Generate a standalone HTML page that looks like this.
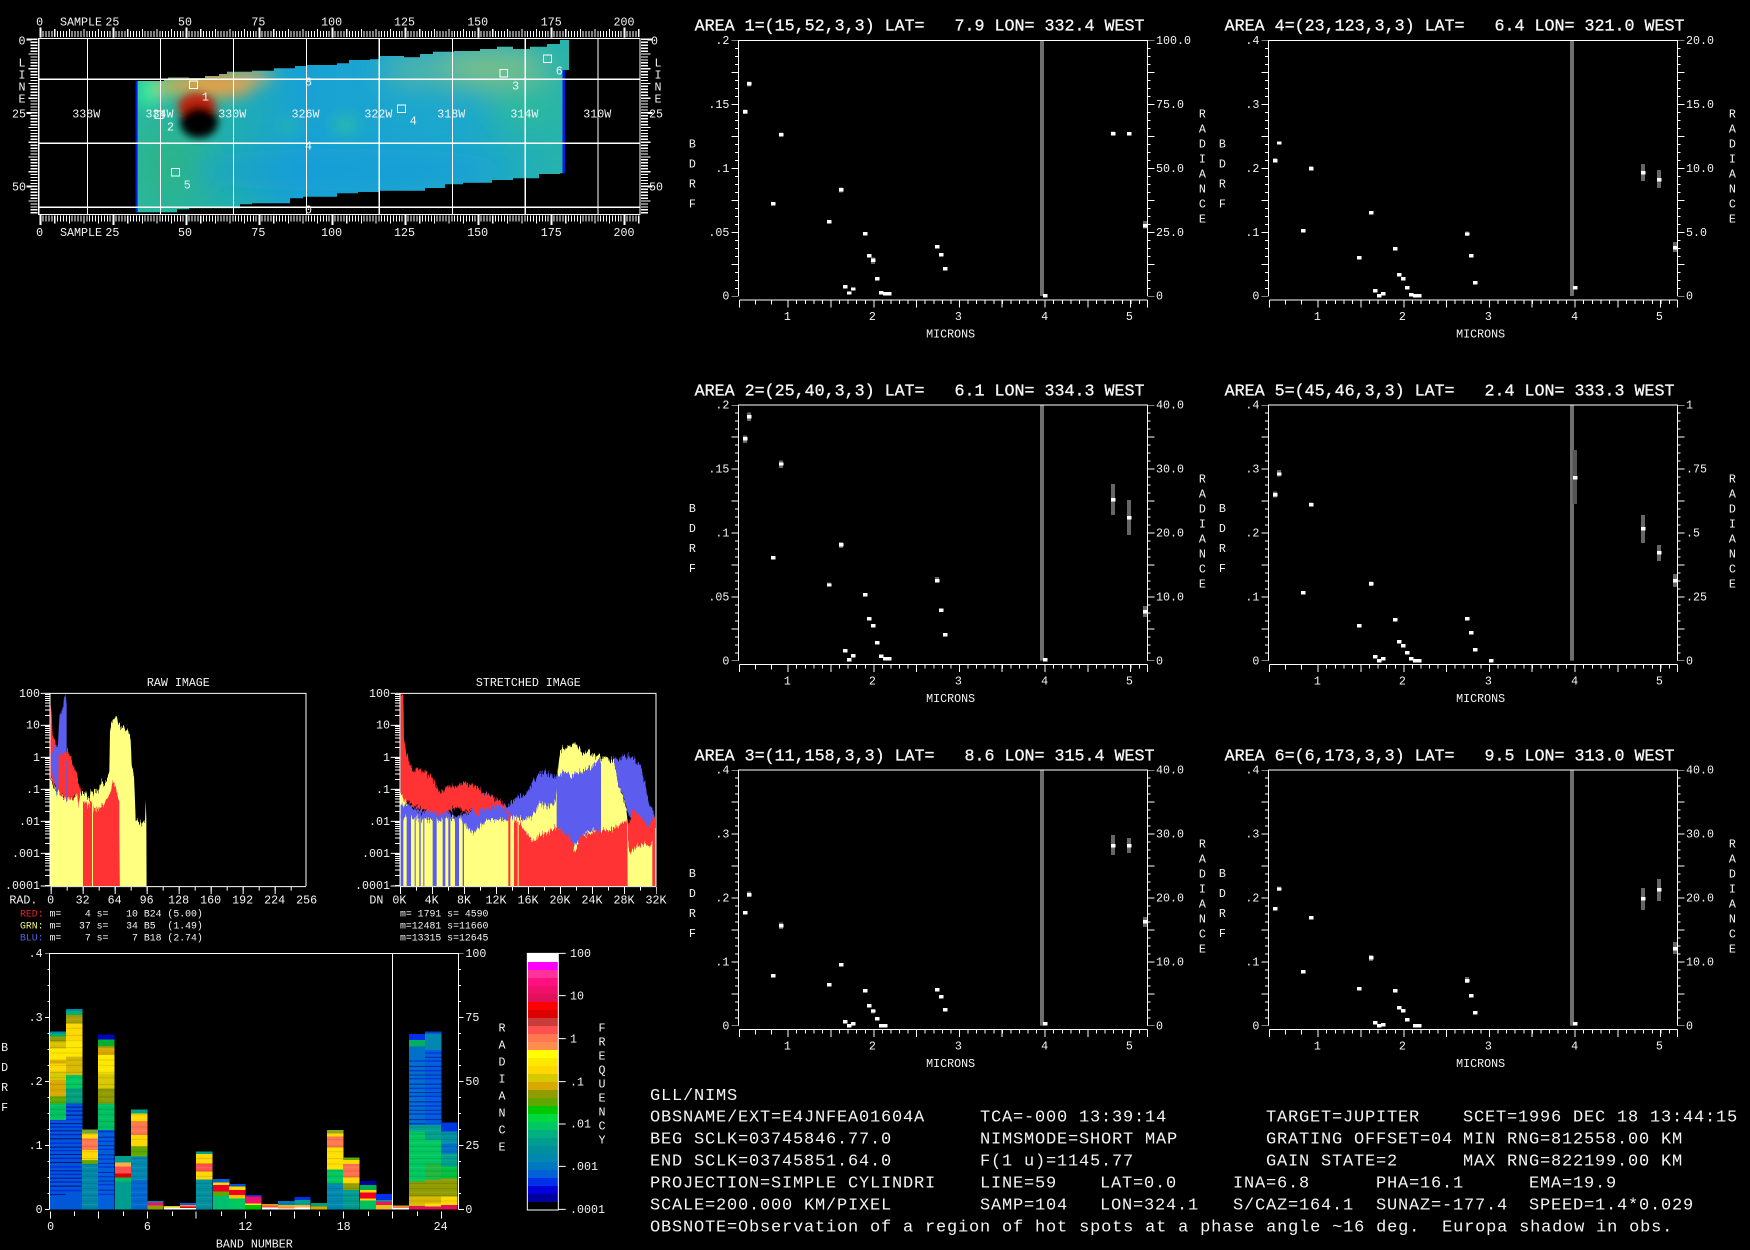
<!DOCTYPE html>
<html><head><meta charset="utf-8"><title>GLL/NIMS</title>
<style>
html,body{margin:0;padding:0;background:#000;width:1750px;height:1250px;overflow:hidden}
svg{display:block}
text{font-family:"Liberation Mono","DejaVu Sans Mono",monospace;fill:#f4f4f4;white-space:pre}
.s{font-size:35px}
.m{font-size:11.67px}
.l{font-size:29.5px}
.t{font-size:50px;stroke:#fff;stroke-width:.9px}
.b{font-size:17px;letter-spacing:.8px}
.e{text-anchor:end}
.c{text-anchor:middle}
.d rect{width:13px;height:10px;fill:#fff}
.g rect{width:12px;fill:#666}
.col rect{width:49px}
.cb rect{width:93px;x:0}
.cr{shape-rendering:crispEdges}
</style></head>
<body>
<svg xmlns="http://www.w3.org/2000/svg" width="1750" height="1250" viewBox="0 0 1750 1250">
<defs>
<g id="ax" fill="none" stroke="#fff" class="cr">
<path d="M175,888V121H1402V888" stroke-width="3"/>
<path d="M170,121V889M1407,121V889" stroke-width="10" stroke-dasharray="3 21" stroke-dashoffset="1.5"/>
<path d="M165,121V889M1413,121V889" stroke-width="20" stroke-dasharray="3 93" stroke-dashoffset="1.5"/>
<path d="M179,900H1402" stroke-width="3"/>
<path d="M323,906H1402" stroke-width="12" stroke-dasharray="3 22.7"/>
<path d="M323,911H1402" stroke-width="22" stroke-dasharray="3 125.4"/>
<path d="M179,900v22M1402,900v22M227,900v14M275,900v14" stroke-width="3"/>
</g>
<g id="logt" stroke="#fff" stroke-width="3" fill="none" class="cr"><path d="M135,96H150M135,67H150M135,50H150M135,38H150M135,29H150M135,21H150M135,15H150M135,9H150M135,4H150"/></g>
<g id="logtick"><path d="M122,0H150" stroke="#fff" stroke-width="3"/><use href="#logt"/></g>
<clipPath id="cp"><path d="M135.5,81H164V79H168V77.5H189V78H205V76H219V74H227V71.7H252V70.7H274V68.3H295V66H307V65H337V63.3H349V60H370V59.3H379V56H404V57.3H420V54H433V51.7H454V51H480V49H497V46.7H513V49H530V46.7H547V44H560V40H569V70H565V173.3H560V174H539V178.3H513V180H492V182.7H463V184.3H445V188H425V190.7H379V192H358V193.3H337V196.7H303V198.3H290V203.3H252V204.3H240V208.3H189V209.3H177V212.3H135.5Z"/></clipPath>
<clipPath id="hc1"><rect x="150" y="70" width="768" height="578"/></clipPath>
<clipPath id="hc2"><rect x="180" y="70" width="768" height="578"/></clipPath>
<filter id="b8" x="-50%" y="-50%" width="200%" height="200%"><feGaussianBlur stdDeviation="8"/></filter>
<filter id="b4" x="-50%" y="-50%" width="200%" height="200%"><feGaussianBlur stdDeviation="4"/></filter>
<filter id="b14" x="-50%" y="-50%" width="200%" height="200%"><feGaussianBlur stdDeviation="14"/></filter>
<filter id="jag" filterUnits="userSpaceOnUse" x="100" y="0" width="900" height="720" color-interpolation-filters="sRGB">
<feTurbulence type="fractalNoise" baseFrequency="0.3 0.002" numOctaves="2" seed="4" result="n"/>
<feColorMatrix in="n" type="matrix" values="1 0 0 0 0  0 0 0 0 .5  0 0 0 0 .5  0 0 0 0 1" result="m"/>
<feDisplacementMap in="SourceGraphic" in2="m" scale="45" xChannelSelector="G" yChannelSelector="R"/>
</filter>
<linearGradient id="base" x1="0" x2="1" y1="0" y2="0"><stop offset="0" stop-color="#2db89c"/><stop offset=".2" stop-color="#22b0a8"/><stop offset=".38" stop-color="#18a2d4"/><stop offset=".75" stop-color="#1ca8cc"/><stop offset="1" stop-color="#28b4a8"/></linearGradient>
<pattern id="st1" width="49" height="71" patternUnits="userSpaceOnUse"><rect y="3" width="49" height="3" fill="#001090"/><rect y="14" width="49" height="4" fill="#0020c0"/><rect y="27" width="49" height="3" fill="#000a70"/><rect y="39" width="49" height="5" fill="#0030e0"/><rect y="52" width="49" height="3" fill="#001090"/><rect y="62" width="49" height="4" fill="#0028d0"/></pattern>
<pattern id="st2" width="49" height="53" patternUnits="userSpaceOnUse"><rect y="7" width="49" height="3" fill="#0020b0"/><rect y="19" width="49" height="4" fill="#0030e0"/><rect y="33" width="49" height="2" fill="#001090"/><rect y="43" width="49" height="4" fill="#0030e0"/></pattern>
<pattern id="st3" width="49" height="37" patternUnits="userSpaceOnUse"><rect y="5" width="49" height="2" fill="#000" fill-opacity=".14"/><rect y="15" width="49" height="3" fill="#fff" fill-opacity=".08"/><rect y="26" width="49" height="2" fill="#000" fill-opacity=".18"/><rect y="32" width="49" height="2" fill="#fff" fill-opacity=".06"/></pattern>
</defs>
<rect width="1750" height="1250" fill="#000"/>

<!-- MAP -->
<g clip-path="url(#cp)">
<rect x="130" y="35" width="445" height="185" fill="url(#base)"/>
<g filter="url(#b14)">
<ellipse cx="172" cy="165" rx="34" ry="36" fill="#2cb48a"/>
<ellipse cx="485" cy="68" rx="66" ry="20" fill="#7cc088"/>
<ellipse cx="420" cy="70" rx="38" ry="14" fill="#5cb8a0"/>
<ellipse cx="530" cy="105" rx="36" ry="28" fill="#2cb8a0"/>
<ellipse cx="350" cy="170" rx="160" ry="12" fill="#169cd8"/>
</g>
<g filter="url(#b8)">
<ellipse cx="345" cy="125" rx="12" ry="7" fill="#30c49c"/>
<ellipse cx="290" cy="126" rx="12" ry="5" fill="#2cbca0"/>
<ellipse cx="148" cy="92" rx="12" ry="15" fill="#30ec9c"/>
<ellipse cx="172" cy="86" rx="16" ry="9" fill="#c8b854"/>
<ellipse cx="215" cy="85" rx="40" ry="12" fill="#f4a040"/>
<ellipse cx="252" cy="77" rx="22" ry="6" fill="#d0ac60"/>
</g>
<g filter="url(#b4)">
<ellipse cx="197" cy="107" rx="19" ry="14" fill="#c02810"/>
<ellipse cx="199" cy="122" rx="19" ry="16" fill="#000"/>
</g>
<rect x="135" y="80" width="2.6" height="135" fill="#0818e8"/>
<rect x="562.5" y="70" width="3" height="105" fill="#0818e8"/>
</g>
<g fill="none" stroke="#fff" class="cr">
<rect x="38.7" y="38.5" width="601.3" height="176" stroke-width="1.2"/>
<path d="M87.5,38V214M160.4,38V214M233.6,38V214M306.4,38V214M379.2,38V214M452.4,38V214M525.3,38V214M598,38V214M38,79.3H640M38,143.3H640M38,207.3H640" stroke-width="1.2"/>
<path d="M39.6,34H640M39.6,218.5H640" stroke-width="6" stroke-dasharray="1 1.92"/>
<path d="M39.6,33H640M39.6,219.5H640" stroke-width="8" stroke-dasharray="1.2 13.4"/>
<path d="M39.6,32.5H640M39.6,220H640" stroke-width="10" stroke-dasharray="2 71"/>
<path d="M34,38.7V214M644.5,38.7V214" stroke-width="7" stroke-dasharray="1.3 1.64"/>
<path d="M33,38.7V214M646,38.7V214" stroke-width="9" stroke-dasharray="1.3 13.4"/>
<path d="M29,38.7V190M650,38.7V190" stroke-width="5" stroke-dasharray="2 71.5"/>
<rect x="189.5" y="81" width="8" height="7.4"/><rect x="155" y="111" width="8" height="7.4"/><rect x="500" y="69.6" width="7.6" height="7.6"/><rect x="397.6" y="105" width="8" height="7.6"/><rect x="171.6" y="168.6" width="8" height="7.6"/><rect x="543.3" y="55" width="8" height="7.4"/>
</g>
<g class="m">
<text x="39.6" y="25.3" class="m c">0</text><text x="60" y="25.3" class="m">SAMPLE</text><text x="112.4" y="25.3" class="m c">25</text><text x="185" y="25.3" class="m c">50</text><text x="258.4" y="25.3" class="m c">75</text><text x="331.6" y="25.3" class="m c">100</text><text x="404.5" y="25.3" class="m c">125</text><text x="477.7" y="25.3" class="m c">150</text><text x="551.3" y="25.3" class="m c">175</text><text x="624" y="25.3" class="m c">200</text>
<text x="39.6" y="236" class="m c">0</text><text x="60" y="236" class="m">SAMPLE</text><text x="112.4" y="236" class="m c">25</text><text x="185" y="236" class="m c">50</text><text x="258.4" y="236" class="m c">75</text><text x="331.6" y="236" class="m c">100</text><text x="404.5" y="236" class="m c">125</text><text x="477.7" y="236" class="m c">150</text><text x="551.3" y="236" class="m c">175</text><text x="624" y="236" class="m c">200</text>
<text x="22" y="44.5" class="m c">0</text><text x="19" y="117.5" class="m c">25</text><text x="19" y="190.5" class="m c">50</text>
<text x="651" y="44.5" class="m">0</text><text x="649" y="117.5" class="m">25</text><text x="649" y="190.5" class="m">50</text>
<text x="22" y="66.7" class="m c">L</text><text x="22" y="78.7" class="m c">I</text><text x="22" y="90.7" class="m c">N</text><text x="22" y="102.7" class="m c">E</text>
<text x="658" y="66.7" class="m c">L</text><text x="658" y="78.7" class="m c">I</text><text x="658" y="90.7" class="m c">N</text><text x="658" y="102.7" class="m c">E</text>
<text x="86.3" y="117.5" class="m c">338W</text><text x="159.5" y="117.5" class="m c">334W</text><text x="232.3" y="117.5" class="m c">330W</text><text x="305.5" y="117.5" class="m c">326W</text><text x="378.4" y="117.5" class="m c">322W</text><text x="451.2" y="117.5" class="m c">318W</text><text x="524.4" y="117.5" class="m c">314W</text><text x="597.2" y="117.5" class="m c">310W</text>
<text x="308.5" y="85.7" class="m c">8</text><text x="308.5" y="149.7" class="m c">4</text><text x="308.5" y="213.7" class="m c">0</text>
<text x="205.4" y="100.7" class="m c">1</text><text x="170.5" y="130.7" class="m c">2</text><text x="515.6" y="89.7" class="m c">3</text><text x="413.3" y="124.7" class="m c">4</text><text x="187.3" y="188.3" class="m c">5</text><text x="559.3" y="74.7" class="m c">6</text>
</g>

<!-- RAW HISTOGRAM -->
<g transform="translate(0,670) scale(.33333)">
<g clip-path="url(#hc1)"><g filter="url(#jag)">
<polygon fill="#ffff80" points="150,330 160,345 170,360 180,365 190,378 200,380 215,385 230,372 240,368 250,380 258,376 270,385 272,362 280,372 284,362 296,360 300,345 304,330 312,344 320,340 328,310 330,180 338,155 345,135 350,140 355,165 362,170 370,165 375,178 385,180 392,205 395,290 402,320 407,450 415,455 425,465 430,450 435,452 437,390 439,450 440,690 150,690"/>
<polygon fill="#ff3333" points="150,100 155,130 158,195 170,225 175,235 200,240 215,265 230,310 236,340 243,368 235,405 230,375 222,372 212,390 205,385 200,392 190,372 180,375 172,355 150,325"/>
<polygon fill="#ff3333" points="248,402 262,405 278,395 282,420 300,410 320,395 330,375 336,345 342,335 350,360 358,400 358,490 360,690 248,690"/>
<rect x="245" y="368" width="4" height="320" fill="#ffff80"/><rect x="276" y="390" width="3" height="300" fill="#ffff80"/>
<polygon fill="#5c5cee" points="152,262 165,225 174,225 178,140 190,105 193,75 198,75 200,110 200,240 176,258 175,355 170,380 168,348 158,318"/>
<rect x="199" y="262" width="3" height="128" fill="#5c5cee"/>
</g></g>
<path d="M150,70H918V648" fill="none" stroke="#fff" stroke-width="3"/><path d="M150,70V648H122" fill="none" stroke="#fff" stroke-width="3"/>
<use href="#logtick" y="70"/><use href="#logtick" y="166"/><use href="#logtick" y="262"/><use href="#logtick" y="358"/><use href="#logtick" y="454"/><use href="#logtick" y="550"/>
<g fill="none" stroke="#fff"><path d="M152,650H918" stroke-width="3"/><path d="M152,656H920" stroke-width="12" stroke-dasharray="3 45"/><path d="M152,661H920" stroke-width="22" stroke-dasharray="3 93"/></g>
<text x="535" y="48" class="s c">RAW IMAGE</text>
<text x="120" y="81" class="s e">100</text><text x="120" y="176" class="s e">10</text><text x="120" y="273" class="s e">1</text><text x="120" y="369" class="s e">.1</text><text x="120" y="465" class="s e">.01</text><text x="120" y="561" class="s e">.001</text><text x="120" y="657" class="s e">.0001</text>
<text x="28" y="700" class="s">RAD.</text>
<text x="152" y="700" class="s c">0</text><text x="248" y="700" class="s c">32</text><text x="344" y="700" class="s c">64</text><text x="440" y="700" class="s c">96</text><text x="536" y="700" class="s c">128</text><text x="632" y="700" class="s c">160</text><text x="728" y="700" class="s c">192</text><text x="824" y="700" class="s c">224</text><text x="920" y="700" class="s c">256</text>
<text x="60" y="740" class="l"><tspan style="fill:#e02828">RED:</tspan> m=    4 s=   10 B24 (5.00)</text>
<text x="60" y="776" class="l"><tspan style="fill:#f0f080">GRN:</tspan> m=   37 s=   34 B5  (1.49)</text>
<text x="60" y="812" class="l"><tspan style="fill:#5060e0">BLU:</tspan> m=    7 s=    7 B18 (2.74)</text>
</g>

<!-- STRETCHED HISTOGRAM -->
<g transform="translate(340,670) scale(.33333)">
<g clip-path="url(#hc2)"><g filter="url(#jag)">
<polygon fill="#ffff80" points="180,360 195,385 210,420 240,430 300,440 400,445 500,430 540,430 600,400 650,350 652,320 660,240 680,235 695,218 710,225 730,250 745,240 770,262 800,262 820,270 835,340 860,420 864,470 948,470 948,690 180,690"/>
<polygon fill="#5c5cee" points="182,400 210,405 250,430 300,420 350,440 400,420 430,365 480,395 505,410 520,390 540,380 560,372 580,330 600,312 620,308 650,322 670,305 700,315 730,300 760,285 785,270 785,490 760,480 735,490 710,520 690,540 670,490 650,470 650,362 645,400 620,410 600,400 575,440 550,450 520,440 505,450 440,450 420,470 400,490 380,470 360,445 300,450 250,450 210,440 182,440"/>
<polygon fill="#5c5cee" points="820,268 860,258 880,262 900,285 915,340 930,410 942,425 945,470 920,500 880,440 864,440 862,420 835,340"/>
<g fill="#5c5cee"><rect x="182" y="430" width="8" height="260"/><rect x="200" y="430" width="13" height="260"/><rect x="224" y="440" width="3" height="250"/><rect x="238" y="440" width="4" height="250"/><rect x="250" y="440" width="3" height="250"/><rect x="278" y="440" width="12" height="250"/><rect x="308" y="440" width="8" height="250"/><rect x="325" y="440" width="6" height="250"/><rect x="345" y="440" width="12" height="250"/><rect x="368" y="440" width="4" height="250"/></g>
<polygon fill="#ff3333" points="182,70 190,70 192,200 198,245 210,285 225,300 235,295 250,312 270,315 285,340 300,365 330,352 360,345 375,335 400,350 415,352 430,372 450,378 470,390 490,400 505,425 490,415 470,405 445,420 425,415 415,440 395,420 370,425 350,410 320,430 290,430 260,428 240,418 215,402 195,390 182,365"/>
<polygon fill="#ff3333" points="522,450 540,460 560,490 580,515 600,495 620,490 650,470 670,490 690,500 705,550 720,500 750,490 780,480 810,480 840,465 862,450 863,690 522,690"/>
<polygon fill="#ff3333" points="864,470 880,420 900,440 925,470 945,440 945,500 930,530 915,520 890,530 870,550 864,520"/>
<rect x="505" y="430" width="6" height="260" fill="#ff3333"/><rect x="937" y="470" width="9" height="220" fill="#ff3333"/>
<rect x="533" y="450" width="3" height="240" fill="#ffff80"/><rect x="783" y="265" width="4" height="220" fill="#ffff80"/><rect x="791" y="270" width="3" height="210" fill="#ffff80"/>
</g></g>
<path d="M180,70H948V648" fill="none" stroke="#fff" stroke-width="3"/><path d="M180,70V648H152" fill="none" stroke="#fff" stroke-width="3"/>
<g transform="translate(30,0)"><use href="#logtick" y="70"/><use href="#logtick" y="166"/><use href="#logtick" y="262"/><use href="#logtick" y="358"/><use href="#logtick" y="454"/><use href="#logtick" y="550"/></g>
<g fill="none" stroke="#fff"><path d="M180,650H948" stroke-width="3"/><path d="M180,656H950" stroke-width="12" stroke-dasharray="3 45"/><path d="M180,661H950" stroke-width="22" stroke-dasharray="3 93"/></g>
<text x="565" y="48" class="s c">STRETCHED IMAGE</text>
<text x="150" y="81" class="s e">100</text><text x="150" y="176" class="s e">10</text><text x="150" y="273" class="s e">1</text><text x="150" y="369" class="s e">.1</text><text x="150" y="465" class="s e">.01</text><text x="150" y="561" class="s e">.001</text><text x="150" y="657" class="s e">.0001</text>
<text x="88" y="700" class="s">DN</text>
<text x="178" y="700" class="s c">0K</text><text x="275" y="700" class="s c">4K</text><text x="372" y="700" class="s c">8K</text><text x="468" y="700" class="s c">12K</text><text x="564" y="700" class="s c">16K</text><text x="660" y="700" class="s c">20K</text><text x="756" y="700" class="s c">24K</text><text x="852" y="700" class="s c">28K</text><text x="948" y="700" class="s c">32K</text>
<text x="180" y="740" class="l">m= 1791 s= 4590</text>
<text x="180" y="776" class="l">m=12481 s=11660</text>
<text x="180" y="812" class="l">m=13315 s=12645</text>
</g>

<!-- BAND PLOT -->
<g transform="translate(40,940) scale(.33333)">
<g class="col cr">
<g transform="translate(29,0)"><rect y="275" height="5" fill="#0088b0"/><rect y="280" height="10" fill="#00b070"/><rect y="290" height="15" fill="#909c00"/><rect y="305" height="20" fill="#d8c000"/><rect y="325" height="37" fill="#ffe800"/><rect y="362" height="8" fill="#d8a800"/><rect y="370" height="25" fill="#ffd800"/><rect y="395" height="25" fill="#d8c800"/><rect y="420" height="50" fill="#d8a800"/><rect y="470" height="20" fill="#60a800"/><rect y="490" height="50" fill="#00c060"/><rect y="540" height="268" fill="#0058d8"/><rect y="540" height="230" fill="url(#st1)"/><rect y="290" height="250" fill="url(#st3)"/></g>
<g transform="translate(78,0)"><rect y="207" height="6" fill="#0088b0"/><rect y="213" height="12" fill="#00b070"/><rect y="225" height="25" fill="#a8a000"/><rect y="250" height="50" fill="#ffd800"/><rect y="300" height="50" fill="#ffe800"/><rect y="350" height="55" fill="#d8b800"/><rect y="405" height="40" fill="#00c860"/><rect y="445" height="45" fill="#00a080"/><rect y="490" height="318" fill="#0058d8"/><rect y="490" height="270" fill="url(#st1)"/><rect y="225" height="265" fill="url(#st3)"/></g>
<g transform="translate(126,0)"><rect y="568" height="12" fill="#70a840"/><rect y="580" height="16" fill="#ffd800"/><rect y="596" height="34" fill="#ff7850"/><rect y="630" height="30" fill="#ffd800"/><rect y="660" height="12" fill="#60a800"/><rect y="672" height="136" fill="#0088a8"/><rect y="580" height="228" fill="url(#st3)"/></g>
<g transform="translate(174,0)"><rect y="283" height="15" fill="#0000c0"/><rect y="298" height="22" fill="#00b030"/><rect y="320" height="25" fill="#d8a800"/><rect y="345" height="55" fill="#ffe800"/><rect y="400" height="45" fill="#d8c800"/><rect y="445" height="45" fill="#909c00"/><rect y="490" height="80" fill="#00c060"/><rect y="570" height="238" fill="#0060d8"/><rect y="570" height="200" fill="url(#st2)"/><rect y="320" height="250" fill="url(#st3)"/></g>
<g transform="translate(225,0)"><rect y="648" height="20" fill="#009c90"/><rect y="668" height="12" fill="#ffb040"/><rect y="680" height="20" fill="#ff5050"/><rect y="700" height="12" fill="#dd0000"/><rect y="712" height="13" fill="#00c060"/><rect y="725" height="83" fill="#009c90"/></g>
<g transform="translate(273,0)"><rect y="508" height="12" fill="#00a090"/><rect y="520" height="25" fill="#ffd800"/><rect y="545" height="40" fill="#ff7850"/><rect y="585" height="35" fill="#ffd800"/><rect y="620" height="30" fill="#60a800"/><rect y="650" height="70" fill="#0088b0"/><rect y="720" height="88" fill="#0068d0"/><rect y="520" height="288" fill="url(#st3)"/></g>
<g transform="translate(322,0)"><rect y="783" height="4" fill="#0088b0"/><rect y="787" height="10" fill="#f0106a"/><rect y="797" height="11" fill="#909c00"/></g>
<g transform="translate(372,0)"><rect y="798" height="5" fill="#d8c800"/><rect y="803" height="5" fill="#fff"/></g>
<g transform="translate(420,0)"><rect y="789" height="6" fill="#0060d8"/><rect y="795" height="5" fill="#ff8c50"/><rect y="800" height="4" fill="#dd0000"/><rect y="804" height="4" fill="#fff"/></g>
<g transform="translate(468,0)"><rect y="635" height="7" fill="#00a090"/><rect y="642" height="28" fill="#ffd800"/><rect y="670" height="25" fill="#ff5050"/><rect y="695" height="23" fill="#ffd800"/><rect y="718" height="90" fill="#0090a0"/><rect y="642" height="166" fill="url(#st3)"/></g>
<g transform="translate(519,0)"><rect y="717" height="10" fill="#0060d8"/><rect y="727" height="8" fill="#ffd800"/><rect y="735" height="20" fill="#f00020"/><rect y="755" height="13" fill="#60a800"/><rect y="768" height="40" fill="#00c070"/></g>
<g transform="translate(567,0)"><rect y="732" height="8" fill="#0050d8"/><rect y="740" height="10" fill="#ffd800"/><rect y="750" height="15" fill="#f00020"/><rect y="765" height="10" fill="#ffc000"/><rect y="775" height="33" fill="#00c860"/></g>
<g transform="translate(615,0)"><rect y="765" height="5" fill="#0030e8"/><rect y="770" height="20" fill="#f0106a"/><rect y="790" height="5" fill="#ffe800"/><rect y="795" height="13" fill="#00c000"/></g>
<g transform="translate(666,0)"><rect y="792" height="5" fill="#d8a800"/><rect y="797" height="5" fill="#ff5050"/><rect y="802" height="6" fill="#fff"/></g>
<g transform="translate(714,0)"><rect y="783" height="12" fill="#0078c0"/><rect y="795" height="5" fill="#d8c800"/><rect y="800" height="5" fill="#ff8c50"/><rect y="805" height="3" fill="#fff"/></g>
<g transform="translate(763,0)"><rect y="771" height="9" fill="#0030e8"/><rect y="780" height="15" fill="#00a090"/><rect y="795" height="8" fill="#ffb040"/><rect y="803" height="5" fill="#fff"/></g>
<g transform="translate(813,0)"><rect y="789" height="11" fill="#00a070"/><rect y="800" height="8" fill="#d8a800"/></g>
<g transform="translate(861,0)"><rect y="570" height="10" fill="#90a820"/><rect y="580" height="10" fill="#ffd800"/><rect y="590" height="32" fill="#ff7850"/><rect y="622" height="66" fill="#ffe000"/><rect y="688" height="42" fill="#00c860"/><rect y="730" height="78" fill="#0088b0"/><rect y="590" height="218" fill="url(#st3)"/></g>
<g transform="translate(909,0)"><rect y="652" height="8" fill="#60a800"/><rect y="660" height="12" fill="#ffd800"/><rect y="672" height="40" fill="#ff7050"/><rect y="712" height="18" fill="#ffd800"/><rect y="730" height="20" fill="#909c00"/><rect y="750" height="58" fill="#009c90"/><rect y="672" height="136" fill="url(#st3)"/></g>
<g transform="translate(960,0)"><rect y="723" height="12" fill="#0000a0"/><rect y="735" height="15" fill="#00b050"/><rect y="750" height="7" fill="#ffd800"/><rect y="757" height="18" fill="#f00020"/><rect y="775" height="7" fill="#ffd800"/><rect y="782" height="26" fill="#00c060"/></g>
<g transform="translate(1008,0)"><rect y="762" height="18" fill="#0030e8"/><rect y="780" height="5" fill="#00a090"/><rect y="785" height="10" fill="#f0106a"/><rect y="795" height="7" fill="#d8c800"/><rect y="802" height="6" fill="#ffb040"/></g>
<g transform="translate(1058,0)"><rect y="796" height="4" fill="#d8a800"/><rect y="800" height="4" fill="#ff7850"/><rect y="804" height="4" fill="#fff"/></g>
<g transform="translate(1107,0)"><rect y="282" height="18" fill="#0030e8"/><rect y="300" height="20" fill="#00b060"/><rect y="320" height="235" fill="#0070c8"/><rect y="360" height="195" fill="url(#st2)"/><rect y="555" height="20" fill="#00a090"/><rect y="575" height="150" fill="#00c860"/><rect y="725" height="45" fill="#909c00"/><rect y="770" height="28" fill="#d8b800"/><rect y="798" height="10" fill="#e0105a"/><rect y="555" height="243" fill="url(#st3)"/></g>
<g transform="translate(1155,0)"><rect y="275" height="5" fill="#0040d0"/><rect y="280" height="50" fill="#0088b0"/><rect y="330" height="225" fill="#0060d8"/><rect y="330" height="220" fill="url(#st2)"/><rect y="555" height="45" fill="#00a090"/><rect y="600" height="70" fill="#00c860"/><rect y="670" height="50" fill="#20b840"/><rect y="720" height="50" fill="#909c00"/><rect y="770" height="20" fill="#d8b800"/><rect y="790" height="10" fill="#ffd800"/><rect y="800" height="8" fill="#e0105a"/><rect y="555" height="245" fill="url(#st3)"/></g>
<g transform="translate(1203,0)"><rect y="547" height="28" fill="#0038e0"/><rect y="575" height="35" fill="#0090a0"/><rect y="610" height="30" fill="#0070c8"/><rect y="640" height="40" fill="#00a090"/><rect y="680" height="35" fill="#00c040"/><rect y="715" height="55" fill="#909c00"/><rect y="770" height="25" fill="#ffd800"/><rect y="795" height="13" fill="#e0105a"/><rect y="575" height="220" fill="url(#st3)"/></g>
</g>
<g fill="none" stroke="#fff" class="cr">
<path d="M29,808V40H1256V808M1057,40V808M29,808H15M1256,808H1272" stroke-width="3"/>
<path d="M25.5,40V808M1259.5,40V808" stroke-width="7" stroke-dasharray="3 45" stroke-dashoffset="1.5"/>
<path d="M22,40V808M1263,40V808" stroke-width="14" stroke-dasharray="3 189" stroke-dashoffset="1.5"/>
<path d="M32,815V835M103,815V828M175,815V835M250,815V828M322,815V835M397,815V828M468,815V835M545,815V828M616,815V835M691,815V828M763,815V835M838,815V828M910,815V835M985,815V828M1057,815V835M1133,815V828M1204,815V835" stroke-width="3"/>
</g>
<text x="8" y="51" class="s e">.4</text><text x="8" y="243" class="s e">.3</text><text x="8" y="435" class="s e">.2</text><text x="8" y="627" class="s e">.1</text><text x="8" y="819" class="s e">0</text>
<text x="1276" y="51" class="s">100</text><text x="1276" y="243" class="s">75</text><text x="1276" y="435" class="s">50</text><text x="1276" y="627" class="s">25</text><text x="1276" y="819" class="s">0</text>
<text x="32" y="870" class="s c">0</text><text x="322" y="870" class="s c">6</text><text x="616" y="870" class="s c">12</text><text x="911" y="870" class="s c">18</text><text x="1202" y="870" class="s c">24</text>
<text x="643" y="922" class="s c">BAND NUMBER</text>
<text x="-106" y="333" class="s c">B</text><text x="-106" y="393" class="s c">D</text><text x="-106" y="453" class="s c">R</text><text x="-106" y="513" class="s c">F</text>
<text x="1386" y="274" class="s c">R<tspan x="1386" dy="51">A</tspan><tspan x="1386" dy="51">D</tspan><tspan x="1386" dy="51">I</tspan><tspan x="1386" dy="51">A</tspan><tspan x="1386" dy="51">N</tspan><tspan x="1386" dy="51">C</tspan><tspan x="1386" dy="51">E</tspan></text>
<!-- color bar -->
<g class="cb cr" transform="translate(1462,0)">
<rect y="40" height="26" fill="#fff"/><rect y="66" height="24" fill="#ff00ff"/><rect y="90" height="24" fill="#ff3399"/><rect y="114" height="24" fill="#ff0f7f"/><rect y="138" height="24" fill="#f0106a"/><rect y="162" height="24" fill="#e0105a"/><rect y="186" height="24" fill="#ff0000"/><rect y="210" height="24" fill="#dd0000"/><rect y="234" height="24" fill="#c83c3c"/><rect y="258" height="24" fill="#ff5050"/><rect y="282" height="24" fill="#ff7850"/><rect y="306" height="24" fill="#ff8c50"/><rect y="330" height="24" fill="#ffff00"/><rect y="354" height="24" fill="#ffe800"/><rect y="378" height="24" fill="#ffd800"/><rect y="402" height="24" fill="#d8c800"/><rect y="426" height="24" fill="#d8a800"/><rect y="450" height="24" fill="#909c00"/><rect y="474" height="24" fill="#60a800"/><rect y="498" height="24" fill="#00c800"/><rect y="522" height="24" fill="#00d840"/><rect y="546" height="24" fill="#00c860"/><rect y="570" height="24" fill="#00b080"/><rect y="594" height="24" fill="#009c90"/><rect y="618" height="24" fill="#00909c"/><rect y="642" height="24" fill="#0088b0"/><rect y="666" height="24" fill="#0078c0"/><rect y="690" height="24" fill="#0060d8"/><rect y="714" height="24" fill="#0030e8"/><rect y="738" height="24" fill="#0000d8"/><rect y="762" height="24" fill="#0000a0"/><rect y="786" height="24" fill="#000"/>
</g>
<path d="M1462,40H1555V810H1462ZM1555,40h22M1555,167h22M1555,296h22M1555,425h22M1555,552h22M1555,679h22M1555,808h22" fill="none" stroke="#fff" stroke-width="3"/>
<text x="1590" y="51" class="s">100</text><text x="1590" y="178" class="s">10</text><text x="1590" y="307" class="s">1</text><text x="1590" y="436" class="s">.1</text><text x="1590" y="563" class="s">.01</text><text x="1590" y="690" class="s">.001</text><text x="1590" y="819" class="s">.0001</text>
<text x="1686" y="274" class="s c">F<tspan x="1686" dy="42">R</tspan><tspan x="1686" dy="42">E</tspan><tspan x="1686" dy="42">Q</tspan><tspan x="1686" dy="42">U</tspan><tspan x="1686" dy="42">E</tspan><tspan x="1686" dy="42">N</tspan><tspan x="1686" dy="42">C</tspan><tspan x="1686" dy="42">Y</tspan></text>
</g>

<!-- CHART 1 -->
<g transform="translate(680,0) scale(.33333)">
<rect x="1080" y="121" width="12" height="767" fill="#6e6e6e"/><use href="#ax"/>
<text x="44" y="92" class="t">AREA 1=(15,52,3,3) LAT=   7.9 LON= 332.4 WEST</text>
<text x="148" y="132" class="s e">.2</text><text x="148" y="324" class="s e">.15</text><text x="148" y="516" class="s e">.1</text><text x="148" y="708" class="s e">.05</text><text x="148" y="899" class="s e">0</text>
<text x="1428" y="132" class="s">100.0</text><text x="1428" y="324" class="s">75.0</text><text x="1428" y="516" class="s">50.0</text><text x="1428" y="708" class="s">25.0</text><text x="1428" y="899" class="s">0</text>
<text x="37" y="442" class="s c">B</text><text x="37" y="502" class="s c">D</text><text x="37" y="562" class="s c">R</text><text x="37" y="622" class="s c">F</text>
<text x="1567" y="353" class="s c">R<tspan x="1567" dy="45">A</tspan><tspan x="1567" dy="45">D</tspan><tspan x="1567" dy="45">I</tspan><tspan x="1567" dy="45">A</tspan><tspan x="1567" dy="45">N</tspan><tspan x="1567" dy="45">C</tspan><tspan x="1567" dy="45">E</tspan></text>
<text x="322" y="960" class="s c">1</text><text x="577" y="960" class="s c">2</text><text x="835" y="960" class="s c">3</text><text x="1094" y="960" class="s c">4</text><text x="1348" y="960" class="s c">5</text><text x="812" y="1012" class="s c">MICRONS</text>
<g class="g cr"><rect x="201" y="244" height="16"/><rect x="189" y="328" height="14"/><rect x="297" y="397" height="13"/><rect x="477" y="562" height="16"/><rect x="573" y="772" height="20"/><rect x="1293" y="394" height="13"/><rect x="1389" y="663" height="23"/></g>
<g class="d cr"><rect x="189" y="330"/><rect x="201" y="246"/><rect x="273" y="606"/><rect x="297" y="399"/><rect x="441" y="660"/><rect x="477" y="564"/><rect x="489" y="855"/><rect x="501" y="874"/><rect x="513" y="862"/><rect x="549" y="696"/><rect x="561" y="762"/><rect x="573" y="776"/><rect x="585" y="831"/><rect x="597" y="873"/><rect x="609" y="876"/><rect x="621" y="876"/><rect x="765" y="735"/><rect x="777" y="759"/><rect x="789" y="801"/><rect x="1089" y="882"/><rect x="1293" y="396"/><rect x="1341" y="396"/><rect x="1389" y="672"/></g>
</g>

<!-- CHART 4 -->
<g transform="translate(1210,0) scale(.33333)">
<rect x="1080" y="121" width="12" height="767" fill="#6e6e6e"/><use href="#ax"/>
<text x="44" y="92" class="t">AREA 4=(23,123,3,3) LAT=   6.4 LON= 321.0 WEST</text>
<text x="148" y="132" class="s e">.4</text><text x="148" y="324" class="s e">.3</text><text x="148" y="516" class="s e">.2</text><text x="148" y="708" class="s e">.1</text><text x="148" y="899" class="s e">0</text>
<text x="1428" y="132" class="s">20.0</text><text x="1428" y="324" class="s">15.0</text><text x="1428" y="516" class="s">10.0</text><text x="1428" y="708" class="s">5.0</text><text x="1428" y="899" class="s">0</text>
<text x="37" y="442" class="s c">B</text><text x="37" y="502" class="s c">D</text><text x="37" y="562" class="s c">R</text><text x="37" y="622" class="s c">F</text>
<text x="1567" y="353" class="s c">R<tspan x="1567" dy="45">A</tspan><tspan x="1567" dy="45">D</tspan><tspan x="1567" dy="45">I</tspan><tspan x="1567" dy="45">A</tspan><tspan x="1567" dy="45">N</tspan><tspan x="1567" dy="45">C</tspan><tspan x="1567" dy="45">E</tspan></text>
<text x="322" y="960" class="s c">1</text><text x="577" y="960" class="s c">2</text><text x="835" y="960" class="s c">3</text><text x="1094" y="960" class="s c">4</text><text x="1348" y="960" class="s c">5</text><text x="812" y="1012" class="s c">MICRONS</text>
<g class="g cr"><rect x="189" y="474" height="14"/><rect x="297" y="498" height="14"/><rect x="765" y="695" height="13"/><rect x="1293" y="492" height="51"/><rect x="1341" y="510" height="54"/><rect x="1389" y="726" height="30"/></g>
<g class="d cr"><rect x="189" y="477"/><rect x="201" y="424"/><rect x="273" y="687"/><rect x="297" y="501"/><rect x="441" y="768"/><rect x="477" y="633"/><rect x="489" y="867"/><rect x="501" y="882"/><rect x="513" y="876"/><rect x="549" y="741"/><rect x="561" y="819"/><rect x="573" y="831"/><rect x="585" y="858"/><rect x="597" y="879"/><rect x="609" y="882"/><rect x="621" y="882"/><rect x="765" y="697"/><rect x="777" y="762"/><rect x="789" y="843"/><rect x="1089" y="858"/><rect x="1293" y="513"/><rect x="1341" y="534"/><rect x="1389" y="738"/></g>
</g>

<!-- CHART 2 -->
<g transform="translate(680,364.67) scale(.33333)">
<rect x="1080" y="121" width="12" height="767" fill="#6e6e6e"/><use href="#ax"/>
<text x="44" y="92" class="t">AREA 2=(25,40,3,3) LAT=   6.1 LON= 334.3 WEST</text>
<text x="148" y="132" class="s e">.2</text><text x="148" y="324" class="s e">.15</text><text x="148" y="516" class="s e">.1</text><text x="148" y="708" class="s e">.05</text><text x="148" y="899" class="s e">0</text>
<text x="1428" y="132" class="s">40.0</text><text x="1428" y="324" class="s">30.0</text><text x="1428" y="516" class="s">20.0</text><text x="1428" y="708" class="s">10.0</text><text x="1428" y="899" class="s">0</text>
<text x="37" y="442" class="s c">B</text><text x="37" y="502" class="s c">D</text><text x="37" y="562" class="s c">R</text><text x="37" y="622" class="s c">F</text>
<text x="1567" y="353" class="s c">R<tspan x="1567" dy="45">A</tspan><tspan x="1567" dy="45">D</tspan><tspan x="1567" dy="45">I</tspan><tspan x="1567" dy="45">A</tspan><tspan x="1567" dy="45">N</tspan><tspan x="1567" dy="45">C</tspan><tspan x="1567" dy="45">E</tspan></text>
<text x="322" y="960" class="s c">1</text><text x="577" y="960" class="s c">2</text><text x="835" y="960" class="s c">3</text><text x="1094" y="960" class="s c">4</text><text x="1348" y="960" class="s c">5</text><text x="812" y="1012" class="s c">MICRONS</text>
<g class="g cr"><rect x="189" y="212" height="23"/><rect x="201" y="143" height="26"/><rect x="297" y="287" height="23"/><rect x="441" y="654" height="12"/><rect x="477" y="532" height="18"/><rect x="765" y="637" height="17"/><rect x="1293" y="358" height="93"/><rect x="1341" y="406" height="105"/><rect x="1389" y="724" height="33"/></g>
<g class="d cr"><rect x="189" y="217"/><rect x="201" y="151"/><rect x="273" y="574"/><rect x="297" y="293"/><rect x="441" y="656"/><rect x="477" y="535"/><rect x="489" y="853"/><rect x="501" y="880"/><rect x="513" y="868"/><rect x="549" y="685"/><rect x="561" y="757"/><rect x="573" y="778"/><rect x="585" y="829"/><rect x="597" y="870"/><rect x="609" y="877"/><rect x="621" y="877"/><rect x="765" y="643"/><rect x="777" y="732"/><rect x="789" y="805"/><rect x="1089" y="880"/><rect x="1293" y="400"/><rect x="1341" y="454"/><rect x="1389" y="736"/></g>
</g>

<!-- CHART 5 -->
<g transform="translate(1210,364.67) scale(.33333)">
<rect x="1080" y="121" width="12" height="767" fill="#6e6e6e"/><rect x="1088" y="256" width="13" height="162" fill="#555"/><use href="#ax"/>
<text x="44" y="92" class="t">AREA 5=(45,46,3,3) LAT=   2.4 LON= 333.3 WEST</text>
<text x="148" y="132" class="s e">.4</text><text x="148" y="324" class="s e">.3</text><text x="148" y="516" class="s e">.2</text><text x="148" y="708" class="s e">.1</text><text x="148" y="899" class="s e">0</text>
<text x="1428" y="132" class="s">1</text><text x="1428" y="324" class="s">.75</text><text x="1428" y="516" class="s">.5</text><text x="1428" y="708" class="s">.25</text><text x="1428" y="899" class="s">0</text>
<text x="37" y="442" class="s c">B</text><text x="37" y="502" class="s c">D</text><text x="37" y="562" class="s c">R</text><text x="37" y="622" class="s c">F</text>
<text x="1567" y="353" class="s c">R<tspan x="1567" dy="45">A</tspan><tspan x="1567" dy="45">D</tspan><tspan x="1567" dy="45">I</tspan><tspan x="1567" dy="45">A</tspan><tspan x="1567" dy="45">N</tspan><tspan x="1567" dy="45">C</tspan><tspan x="1567" dy="45">E</tspan></text>
<text x="322" y="960" class="s c">1</text><text x="577" y="960" class="s c">2</text><text x="835" y="960" class="s c">3</text><text x="1094" y="960" class="s c">4</text><text x="1348" y="960" class="s c">5</text><text x="812" y="1012" class="s c">MICRONS</text>
<g class="g cr"><rect x="189" y="380" height="18"/><rect x="201" y="316" height="20"/><rect x="297" y="413" height="12"/><rect x="477" y="650" height="14"/><rect x="1293" y="451" height="84"/><rect x="1341" y="541" height="48"/><rect x="1389" y="628" height="39"/></g>
<g class="d cr"><rect x="189" y="385"/><rect x="201" y="323"/><rect x="273" y="679"/><rect x="297" y="415"/><rect x="441" y="778"/><rect x="477" y="652"/><rect x="489" y="871"/><rect x="501" y="883"/><rect x="513" y="877"/><rect x="549" y="760"/><rect x="561" y="826"/><rect x="573" y="838"/><rect x="585" y="859"/><rect x="597" y="877"/><rect x="609" y="883"/><rect x="621" y="883"/><rect x="765" y="757"/><rect x="777" y="799"/><rect x="789" y="850"/><rect x="837" y="883"/><rect x="1089" y="334"/><rect x="1293" y="487"/><rect x="1341" y="559"/><rect x="1389" y="643"/></g>
</g>

<!-- CHART 3 -->
<g transform="translate(680,729.67) scale(.33333)">
<rect x="1080" y="121" width="12" height="767" fill="#6e6e6e"/><use href="#ax"/>
<text x="44" y="92" class="t">AREA 3=(11,158,3,3) LAT=   8.6 LON= 315.4 WEST</text>
<text x="148" y="132" class="s e">.4</text><text x="148" y="324" class="s e">.3</text><text x="148" y="516" class="s e">.2</text><text x="148" y="708" class="s e">.1</text><text x="148" y="899" class="s e">0</text>
<text x="1428" y="132" class="s">40.0</text><text x="1428" y="324" class="s">30.0</text><text x="1428" y="516" class="s">20.0</text><text x="1428" y="708" class="s">10.0</text><text x="1428" y="899" class="s">0</text>
<text x="37" y="442" class="s c">B</text><text x="37" y="502" class="s c">D</text><text x="37" y="562" class="s c">R</text><text x="37" y="622" class="s c">F</text>
<text x="1567" y="353" class="s c">R<tspan x="1567" dy="45">A</tspan><tspan x="1567" dy="45">D</tspan><tspan x="1567" dy="45">I</tspan><tspan x="1567" dy="45">A</tspan><tspan x="1567" dy="45">N</tspan><tspan x="1567" dy="45">C</tspan><tspan x="1567" dy="45">E</tspan></text>
<text x="322" y="960" class="s c">1</text><text x="577" y="960" class="s c">2</text><text x="835" y="960" class="s c">3</text><text x="1094" y="960" class="s c">4</text><text x="1348" y="960" class="s c">5</text><text x="812" y="1012" class="s c">MICRONS</text>
<g class="g cr"><rect x="201" y="486" height="16"/><rect x="297" y="579" height="19"/><rect x="573" y="838" height="14"/><rect x="1293" y="316" height="60"/><rect x="1341" y="325" height="45"/><rect x="1389" y="562" height="30"/></g>
<g class="d cr"><rect x="189" y="544"/><rect x="201" y="490"/><rect x="273" y="733"/><rect x="297" y="583"/><rect x="441" y="760"/><rect x="477" y="700"/><rect x="489" y="871"/><rect x="501" y="883"/><rect x="513" y="877"/><rect x="549" y="778"/><rect x="561" y="823"/><rect x="573" y="839"/><rect x="585" y="862"/><rect x="597" y="883"/><rect x="609" y="883"/><rect x="765" y="775"/><rect x="777" y="796"/><rect x="789" y="835"/><rect x="1089" y="877"/><rect x="1293" y="343"/><rect x="1341" y="343"/><rect x="1389" y="571"/></g>
</g>

<!-- CHART 6 -->
<g transform="translate(1210,729.67) scale(.33333)">
<rect x="1080" y="121" width="12" height="767" fill="#6e6e6e"/><use href="#ax"/>
<text x="44" y="92" class="t">AREA 6=(6,173,3,3) LAT=   9.5 LON= 313.0 WEST</text>
<text x="148" y="132" class="s e">.4</text><text x="148" y="324" class="s e">.3</text><text x="148" y="516" class="s e">.2</text><text x="148" y="708" class="s e">.1</text><text x="148" y="899" class="s e">0</text>
<text x="1428" y="132" class="s">40.0</text><text x="1428" y="324" class="s">30.0</text><text x="1428" y="516" class="s">20.0</text><text x="1428" y="708" class="s">10.0</text><text x="1428" y="899" class="s">0</text>
<text x="37" y="442" class="s c">B</text><text x="37" y="502" class="s c">D</text><text x="37" y="562" class="s c">R</text><text x="37" y="622" class="s c">F</text>
<text x="1567" y="353" class="s c">R<tspan x="1567" dy="45">A</tspan><tspan x="1567" dy="45">D</tspan><tspan x="1567" dy="45">I</tspan><tspan x="1567" dy="45">A</tspan><tspan x="1567" dy="45">N</tspan><tspan x="1567" dy="45">C</tspan><tspan x="1567" dy="45">E</tspan></text>
<text x="322" y="960" class="s c">1</text><text x="577" y="960" class="s c">2</text><text x="835" y="960" class="s c">3</text><text x="1094" y="960" class="s c">4</text><text x="1348" y="960" class="s c">5</text><text x="812" y="1012" class="s c">MICRONS</text>
<g class="g cr"><rect x="201" y="471" height="13"/><rect x="477" y="676" height="18"/><rect x="765" y="742" height="18"/><rect x="1293" y="475" height="66"/><rect x="1341" y="448" height="66"/><rect x="1389" y="637" height="36"/></g>
<g class="d cr"><rect x="189" y="532"/><rect x="201" y="473"/><rect x="273" y="721"/><rect x="297" y="559"/><rect x="441" y="772"/><rect x="477" y="679"/><rect x="489" y="874"/><rect x="501" y="883"/><rect x="513" y="880"/><rect x="549" y="778"/><rect x="561" y="829"/><rect x="573" y="838"/><rect x="585" y="865"/><rect x="609" y="883"/><rect x="621" y="883"/><rect x="765" y="748"/><rect x="777" y="793"/><rect x="789" y="844"/><rect x="1089" y="877"/><rect x="1293" y="502"/><rect x="1341" y="475"/><rect x="1389" y="652"/></g>
</g>

<!-- BOTTOM INFO -->
<text x="650" y="1100" class="b">GLL/NIMS</text>
<text x="650" y="1121.5" class="b">OBSNAME/EXT=E4JNFEA01604A</text><text x="980" y="1121.5" class="b">TCA=-000 13:39:14</text><text x="1266" y="1121.5" class="b">TARGET=JUPITER</text><text x="1463" y="1121.5" class="b">SCET=1996 DEC 18 13:44:15</text>
<text x="650" y="1143.5" class="b">BEG SCLK=03745846.77.0</text><text x="980" y="1143.5" class="b">NIMSMODE=SHORT MAP</text><text x="1266" y="1143.5" class="b">GRATING OFFSET=04</text><text x="1463" y="1143.5" class="b">MIN RNG=812558.00 KM</text>
<text x="650" y="1165.5" class="b">END SCLK=03745851.64.0</text><text x="980" y="1165.5" class="b">F(1 u)=1145.77</text><text x="1266" y="1165.5" class="b">GAIN STATE=2</text><text x="1463" y="1165.5" class="b">MAX RNG=822199.00 KM</text>
<text x="650" y="1187.5" class="b">PROJECTION=SIMPLE CYLINDRI</text><text x="980" y="1187.5" class="b">LINE=59</text><text x="1100" y="1187.5" class="b">LAT=0.0</text><text x="1233" y="1187.5" class="b">INA=6.8</text><text x="1376" y="1187.5" class="b">PHA=16.1</text><text x="1529" y="1187.5" class="b">EMA=19.9</text>
<text x="650" y="1209.5" class="b">SCALE=200.000 KM/PIXEL</text><text x="980" y="1209.5" class="b">SAMP=104</text><text x="1100" y="1209.5" class="b">LON=324.1</text><text x="1233" y="1209.5" class="b">S/CAZ=164.1</text><text x="1376" y="1209.5" class="b">SUNAZ=-177.4</text><text x="1529" y="1209.5" class="b">SPEED=1.4*0.029</text>
<text x="650" y="1231.5" class="b">OBSNOTE=Observation of a region of hot spots at a phase angle ~16 deg.  Europa shadow in obs.</text>
</svg>
</body></html>
